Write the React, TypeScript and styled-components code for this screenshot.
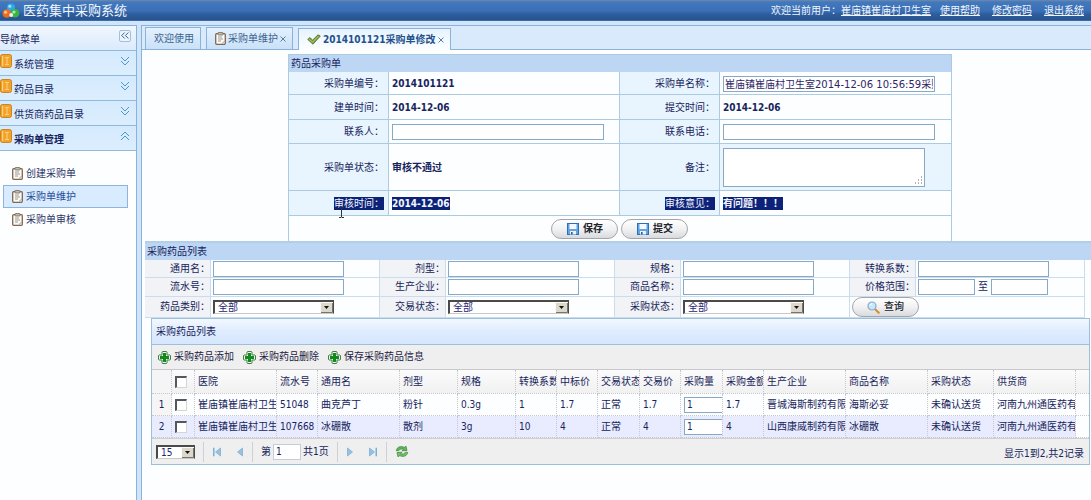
import React from "react";
import styled, { createGlobalStyle, css } from "styled-components";

const GlobalStyle = createGlobalStyle`
  *, *::before, *::after { box-sizing: border-box; }
  body {
    margin: 0;
    background: #fdfeff;
    color: #17245c;
    font: 10px/14px "DejaVu Sans Condensed", "DejaVu Sans", "Noto Sans CJK SC", sans-serif;
  }
  button, input, select, textarea { font: inherit; color: inherit; margin: 0; }
  button { cursor: pointer; }
`;

/* ---------- icons ---------- */

const LogoIcon = () => (
  <svg width="18" height="16" viewBox="0 0 18 16" aria-hidden="true">
    <circle cx="9" cy="4.5" r="4" fill="#2fa8e8" />
    <circle cx="7.8" cy="3.3" r="1.5" fill="#a5e2fb" />
    <circle cx="4.8" cy="10.5" r="4.3" fill="#ee6a1c" />
    <circle cx="3.6" cy="9.2" r="1.6" fill="#ffc07c" />
    <circle cx="13" cy="10.3" r="4.3" fill="#37b53d" />
    <circle cx="12" cy="9" r="1.6" fill="#b0edaa" />
    <circle cx="9.2" cy="12" r="2" fill="#e8f3ee" />
  </svg>
);

const BookIcon = () => (
  <svg width="12" height="14" viewBox="0 0 12 14" aria-hidden="true">
    <rect x="0.5" y="0.5" width="11" height="13" rx="2" fill="#f2a32a" stroke="#cf8420" />
    <path d="M2 2h1.2v10H2z" fill="#ffd07a" />
    <path d="M5 3.5h4M5 10.5h4M7 4v6" stroke="#ffcf7e" fill="none" />
  </svg>
);

const ClipboardIcon = () => (
  <svg width="11" height="13" viewBox="0 0 11 13" aria-hidden="true">
    <rect x="0.7" y="1.7" width="9.6" height="10.6" rx="1" fill="#fbfaf4" stroke="#806653" strokeWidth="1.3" />
    <rect x="3" y="0.5" width="5" height="2.5" rx="0.5" fill="#c5bca8" stroke="#74695c" strokeWidth="0.8" />
    <path d="M3 5h4M3 7h5M3 9h3" stroke="#8a9188" strokeWidth="0.9" />
    <path d="M7 11.5L9.8 9" stroke="#b0a28e" />
  </svg>
);

const CheckIcon = () => (
  <svg width="14" height="11" viewBox="0 0 14 11" aria-hidden="true">
    <path d="M0.7 5.4L3 3.5l2.5 2.7L11 0.8l2.3 1.3L6 10.2z" fill="#7da343" stroke="#49691f" strokeWidth="0.8" />
    <path d="M2 5.2l3.5 3L11.6 2" stroke="#b4d077" fill="none" strokeWidth="0.8" />
  </svg>
);

const CloseIcon = () => (
  <svg width="6" height="6" viewBox="0 0 6 6" aria-hidden="true">
    <path d="M0.5 0.5l5 5M5.5 0.5l-5 5" stroke="#5c7d9d" fill="none" />
  </svg>
);

const Chevrons = ({ up }: { up?: boolean }) => (
  <svg width="10" height="10" viewBox="0 0 10 10" aria-hidden="true">
    <path
      d={up ? "M1 5l4-4 4 4M1 9l4-4 4 4" : "M1 1l4 4 4-4M1 5l4 4 4-4"}
      fill="none"
      stroke="#4b98d0"
    />
  </svg>
);

const CollapseIcon = () => (
  <svg width="8" height="7" viewBox="0 0 8 7" aria-hidden="true">
    <path d="M3.7 0.5l-3 3 3 3M7.4 0.5l-3 3 3 3" fill="none" stroke="#3c6386" />
  </svg>
);

const SaveIcon = () => (
  <svg width="12" height="12" viewBox="0 0 12 12" aria-hidden="true">
    <rect x="0.5" y="0.5" width="11" height="11" fill="#62a3e4" stroke="#2f6fba" />
    <rect x="2.5" y="1" width="7" height="5" fill="#f3f9ff" />
    <rect x="3" y="8" width="6" height="3.5" fill="#eaf3fb" />
    <rect x="4" y="9" width="1.6" height="2.5" fill="#2c5d9c" />
  </svg>
);

const SearchIcon = () => (
  <svg width="13" height="13" viewBox="0 0 13 13" aria-hidden="true">
    <path d="M7.7 7.7l4 4" stroke="#dc8c35" strokeWidth="2.2" strokeLinecap="round" />
    <circle cx="5" cy="5" r="4" fill="#c7e7fa" stroke="#88a9c8" strokeWidth="1.2" />
    <path d="M2.8 4.6q.6-1.8 2.4-1.9" stroke="#fff" fill="none" />
  </svg>
);

const PlusIcon = () => (
  <svg width="13" height="13" viewBox="0 0 13 13" aria-hidden="true">
    <path
      d="M4.5 0.5h4l.5.5v3h3l.5.5v4l-.5.5H9v3l-.5.5h-4L4 12V9H1l-.5-.5v-4L1 4h3V1z"
      fill="#eefaec"
      stroke="#3f7f45"
      strokeLinejoin="round"
    />
    <path d="M5 2h3v3h3v3H8v3H5V8H2V5h3z" fill="#128a1e" />
  </svg>
);

const PagerIcon = ({ kind }: { kind: "first" | "prev" | "next" | "last" }) => {
  const back = kind === "first" || kind === "prev";
  const bar = kind === "first" || kind === "last";
  return (
    <svg width="10" height="10" viewBox="0 0 10 10" aria-hidden="true">
      <path d={back ? "M8.5 1v8L3.5 5z" : "M1.5 1v8L6.5 5z"} fill="#94c2e4" stroke="#7ba9d0" strokeWidth="0.7" />
      {bar && <rect x={back ? 1 : 7.5} y="0.7" width="1.5" height="8.6" fill="#7faed4" />}
    </svg>
  );
};

const RefreshIcon = () => (
  <svg width="14" height="13" viewBox="0 0 14 13" aria-hidden="true">
    <path d="M1.2 5.6C2 2 6 .6 9.2 2.4L11 1.2l1 4.3-5 .3 1.4-1.6C6.6 3.5 4.8 4 3.6 5.8z" fill="#62b557" stroke="#35813a" strokeWidth="0.7" />
    <path d="M12.8 7.4C12 11 8 12.4 4.8 10.6L3 11.8 2 7.5l5-.3-1.4 1.6c1.8.7 3.6.2 4.8-1.6z" fill="#74c164" stroke="#35813a" strokeWidth="0.7" />
  </svg>
);

/* ---------- page frame ---------- */

const Page = styled.div`
  display: flex;
  flex-direction: column;
  min-height: 100vh;
  background: #cfe5fb;
`;

const TopBar = styled.header`
  display: flex;
  align-items: center;
  justify-content: space-between;
  height: 21px;
  padding: 0 7px 0 2px;
  color: #f1f6fd;
  background: linear-gradient(#7089ab 0, #4279bd 2px, #3a6fb6 11px, #2d5d9e 14px, #28548f 20px, #5781b4 21px);
`;

const Brand = styled.h1`
  display: flex;
  align-items: center;
  gap: 3px;
  margin: 0;
  font-size: 13px;
  line-height: 20px;
  font-weight: 400;
`;

const UserLinks = styled.nav`
  display: flex;
  gap: 12px;
  white-space: nowrap;
  a { color: inherit; text-decoration: underline; }
  span { margin-right: -3px; }
`;

const Body = styled.div`
  display: flex;
  flex: 1;
  gap: 4px;
  padding-top: 4px;
`;

const Sidebar = styled.aside`
  flex: none;
  width: 137px;
  background: #fdfeff;
  border: solid #8db2d8;
  border-width: 1px 1px 0 0;
`;

const barBottom = css`
  border-bottom: 1px solid #8fb9dd;
`;

const SideTitle = styled.div`
  display: flex;
  align-items: center;
  justify-content: space-between;
  height: 25px;
  padding: 3px 5px 0 0;
  background: linear-gradient(#f1f7fe, #dbeafc);
  ${barBottom}
`;

const CollapseButton = styled.button`
  display: grid;
  place-items: center;
  width: 12px;
  height: 12px;
  padding: 0;
  margin-bottom: 8px;
  border: 1px solid #9fbfdb;
  border-radius: 2px;
  background: #eaf4fe;
`;

const AccordionHead = styled.button<{ $open?: boolean }>`
  display: flex;
  align-items: center;
  gap: 2px;
  width: 100%;
  height: 25px;
  padding: 0 6px 0 0;
  border: 0;
  ${barBottom}
  background: linear-gradient(#d4eafd, #dceefe);
  font-weight: ${(p) => (p.$open ? 700 : 400)};
  text-align: left;
  > span { flex: 1; padding-top: 4px; }
  > svg { margin-bottom: 4px; }
`;

const SubMenu = styled.ul`
  list-style: none;
  margin: 0;
  padding: 11px 8px 0 3px;
`;

const SubItem = styled.a<{ $active?: boolean }>`
  display: flex;
  align-items: center;
  gap: 3px;
  height: 23px;
  padding-left: 8px;
  color: ${(p) => (p.$active ? "#264d94" : "#2b3567")};
  text-decoration: none;
  border: 1px solid ${(p) => (p.$active ? "#8eb4dc" : "transparent")};
  background: ${(p) => (p.$active ? "#d9ebff" : "transparent")};
`;

const Main = styled.main`
  flex: 1;
  min-width: 0;
  background: #fdfeff;
  border: solid #8db2d8;
  border-width: 1px 0 0 1px;
`;

const TabStrip = styled.div`
  display: flex;
  align-items: flex-end;
  gap: 5px;
  height: 24px;
  padding-left: 3px;
  background: #d8eafc;
  border-bottom: 1px solid #8db2d8;
`;

const Tab = styled.div<{ $active?: boolean }>`
  display: flex;
  align-items: center;
  gap: 2px;
  height: 22px;
  padding: 0 6px 0 8px;
  border: 1px solid #8db2d8;
  border-bottom-width: 0;
  background: ${(p) => (p.$active ? "linear-gradient(#e6f3ff, #fdfeff)" : "linear-gradient(#e4f1fe, #c9e1f8)")};
  margin-bottom: ${(p) => (p.$active ? "-1px" : "0")};
  white-space: nowrap;
`;

const TabLabel = styled.button<{ $active?: boolean }>`
  display: flex;
  align-items: center;
  gap: 2px;
  padding: 0;
  border: 0;
  background: none;
  color: ${(p) => (p.$active ? "#22518d" : "#3d638f")};
  font-weight: ${(p) => (p.$active ? 700 : 400)};
`;

const PlainButton = styled.button`
  display: grid;
  place-items: center;
  padding: 0;
  border: 0;
  background: none;
`;

const Content = styled.div`
  padding: 4px 0 0 3px;
`;

/* ---------- controls ---------- */

const TextBox = styled.input<{ $w: number }>`
  width: ${(p) => p.$w}px;
  height: 16px;
  padding: 0 2px;
  border: 1px solid #86a9c8;
  background: #fff;
`;

const NameBox = styled(TextBox)`
  padding: 0 1px;
  font-family: "DejaVu Sans", "Noto Sans CJK SC", sans-serif;
  text-overflow: clip;
  color: #302567;
`;

const NoteWrap = styled.div`
  position: relative;
  width: 202px;
  height: 39px;
  svg { position: absolute; right: 2px; bottom: 2px; pointer-events: none; }
`;

const Note = styled.textarea`
  display: block;
  width: 100%;
  height: 100%;
  border: 1px solid #86a9c8;
  background: #fff;
  resize: none;
`;

const PillButton = styled.button`
  display: inline-flex;
  align-items: center;
  justify-content: center;
  gap: 4px;
  width: 67px;
  height: 20px;
  padding: 0;
  border: 1px solid #a2a5aa;
  border-radius: 10px;
  background: linear-gradient(#ffffff, #f2f2f3 50%, #d9dadd);
  color: #20242c;
  font-weight: 500;
`;

const SelectBox = styled.span<{ $w: number }>`
  position: relative;
  display: inline-block;
  width: ${(p) => p.$w}px;
  height: 14px;
  border: solid #4a4a4a;
  border-width: 2px 1px 1px 2px;
  border-bottom-color: #c9c9c4;
  background: #fff;
  select {
    appearance: none;
    display: block;
    width: 100%;
    height: 11px;
    padding: 0 14px 0 3px;
    border: 0;
    background: none;
    line-height: 11px;
    color: #2a2375;
  }
  svg { position: absolute; right: 0; top: 0; pointer-events: none; }
`;

const Select = ({ id, w, value, label }: { id: string; w: number; value: string; label?: string }) => (
  <SelectBox $w={w}>
    <select id={id} defaultValue={value} aria-label={label}>
      <option>{value}</option>
    </select>
    <svg width="13" height="11" viewBox="0 0 13 11" aria-hidden="true">
      <rect width="13" height="11" fill="#dcd8cc" />
      <path d="M0.5 11V0.5H13" stroke="#fbfaf5" fill="none" />
      <path d="M12.5 1v9.5H1" stroke="#77746b" fill="none" />
      <path d="M4 4h5L6.5 7z" fill="#111" />
    </svg>
  </SelectBox>
);

/* ---------- order form ---------- */

const FormArea = styled.div`
  padding-left: 4px;
`;

const OrderForm = styled.form`
  position: relative;
  width: 70.5%;
  margin: 0 auto;
  border: 1px solid #adcbe0;
  border-bottom: 0;
`;

const Caption = styled.h2`
  margin: 0;
  height: 17px;
  padding: 0 2px;
  font-size: 10px;
  line-height: 17px;
  font-weight: 400;
  background: #bcd6f4;
`;

const FormRow = styled.div<{ $h: number }>`
  display: grid;
  grid-template-columns: 100px 1fr 100px 1fr;
  height: ${(p) => p.$h}px;
  border-bottom: 1px solid #adcbe0;
`;

const FormLabel = styled.label`
  display: flex;
  align-items: center;
  justify-content: flex-end;
  padding: 1px 4px 0 0;
  background: #e8f5ff;
  border-right: 1px solid #adcbe0;
`;

const FormValue = styled.div<{ $tint?: boolean }>`
  display: flex;
  align-items: center;
  padding: 1px 0 0 3px;
  font-weight: 700;
  border-right: 1px solid #adcbe0;
  background: ${(p) => (p.$tint ? "#e8f5ff" : "transparent")};
  &:last-child { border-right: 0; }
  input, textarea { font-weight: 400; }
`;

const Marked = styled.span`
  background: #0c2278;
  color: #f4f6ff;
  line-height: 13px;
`;

const FormActions = styled.div`
  display: flex;
  align-items: center;
  justify-content: center;
  gap: 3px;
  height: 25px;
  button { font-weight: 700; }
`;

const Caret = styled.svg`
  position: absolute;
  left: 49px;
  top: 152px;
`;

/* ---------- search ---------- */

const SearchForm = styled.form`
  border-top: 2px solid #b3cfe8;
`;

const SearchGrid = styled.div`
  display: grid;
  grid-template-columns: repeat(4, 66px 1fr);
  grid-template-rows: 18px 19px 21px;
  margin-right: 6px;
`;

const SearchLabel = styled.label`
  display: flex;
  align-items: center;
  justify-content: flex-end;
  background: #f1f3f6;
  border: solid #cbdcec;
  border-width: 0 1px 1px 0;
`;

const SearchField = styled.div<{ $wide?: boolean }>`
  display: flex;
  align-items: center;
  gap: 3px;
  padding-left: 2px;
  border: solid #cbdcec;
  border-width: 0 1px 1px 0;
  grid-column: ${(p) => (p.$wide ? "span 2" : "auto")};
`;

/* ---------- grid panel ---------- */

const Panel = styled.section`
  margin: 0 1px 0 6px;
  border: 1px solid #9dbfda;
`;

const PanelTitle = styled.h2`
  margin: 0;
  height: 26px;
  padding: 0 4px;
  font-size: 10px;
  line-height: 26px;
  font-weight: 400;
  background: linear-gradient(#f2f8ff, #dfecfe 50%, #d5e6fd);
  border-bottom: 1px solid #9dbfda;
`;

const Toolbar = styled.div`
  display: flex;
  align-items: center;
  gap: 9px;
  height: 25px;
  padding: 0 6px;
  background: #efefef;
  border-bottom: 1px solid #c9c9cb;
`;

const ToolButton = styled.button`
  display: flex;
  align-items: center;
  gap: 3px;
  padding: 0;
  border: 0;
  background: none;
  color: #1d2244;
  white-space: nowrap;
`;

const DataTable = styled.table`
  width: 100%;
  table-layout: fixed;
  border-collapse: separate;
  border-spacing: 0;
  th, td {
    height: 22px;
    padding: 0 0 0 3px;
    overflow: hidden;
    white-space: nowrap;
    text-align: left;
    font-weight: 400;
    border: dotted #c5c8d0;
    border-width: 0 1px 1px 0;
  }
  th {
    height: 24px;
    background: linear-gradient(#fbfbfb, #f1f1f1);
  }
  th:last-child, td:last-child { border-right: 0; }
  tbody tr:nth-child(2) td:not(:last-child) { background: #e9ecff; }
  tbody td:first-child, thead th:first-child {
    padding: 0;
    text-align: center;
    background: #f5f5f6;
  }
  input { display: block; }
`;

const Tick = styled.input`
  appearance: none;
  width: 12px;
  height: 12px;
  border: solid #55575c;
  border-width: 2px 1px 1px 2px;
  border-right-color: #d5d5d2;
  border-bottom-color: #d5d5d2;
  background: #fff;
`;

const Pager = styled.div`
  display: flex;
  align-items: center;
  height: 26px;
  padding: 0 5px 0 4px;
  gap: 8px;
  background: #efefef;
  border-top: 1px solid #d0d0d2;
  white-space: nowrap;
`;

const Divider = styled.span`
  width: 1px;
  height: 20px;
  background: #cdd0d4;
`;

const IconPair = styled.span`
  display: flex;
  gap: 12px;
`;

const PageNo = styled.label`
  display: flex;
  align-items: center;
  gap: 2px;
  input {
    width: 28px;
    height: 16px;
    padding: 0 2px;
    border: 1px solid #c5cdd8;
    background: #fff;
  }
`;

const Summary = styled.span`
  margin-left: auto;
  padding-top: 5px;
`;

const columns: [string, number][] = [
  ["医院", 82], ["流水号", 41], ["通用名", 82], ["剂型", 58], ["规格", 58], ["转换系数", 41],
  ["中标价", 41], ["交易状态", 42], ["交易价", 41], ["采购量", 42], ["采购金额", 41],
  ["生产企业", 82], ["商品名称", 82], ["采购状态", 66], ["供货商", 82],
];

const rows = [
  ["崔庙镇崔庙村卫生室", "51048", "曲克芦丁", "粉针", "0.3g", "1", "1.7", "正常", "1.7", "1", "1.7", "晋城海斯制药有限公司", "海斯必妥", "未确认送货", "河南九州通医药有限公司"],
  ["崔庙镇崔庙村卫生室", "107668", "冰硼散", "散剂", "3g", "10", "4", "正常", "4", "1", "4", "山西康威制药有限公司", "冰硼散", "未确认送货", "河南九州通医药有限公司"],
];

const QTY = 9;

const searchFields = [
  { label: "通用名", id: "generic" },
  { label: "剂型", id: "form" },
  { label: "规格", id: "spec" },
  { label: "转换系数", id: "ratio" },
  { label: "流水号", id: "serial" },
  { label: "生产企业", id: "maker" },
  { label: "商品名称", id: "brand" },
];

const TextField = ({ label, id }: { label: string; id: string }) => (
  <>
    <SearchLabel htmlFor={id}>{label}：</SearchLabel>
    <SearchField><TextBox $w={131} id={id} /></SearchField>
  </>
);

export default function App() {
  return (
    <Page>
      <GlobalStyle />
      <TopBar>
        <Brand><LogoIcon />医药集中采购系统</Brand>
        <UserLinks>
          <span>欢迎当前用户：<a href="#user">崔庙镇崔庙村卫生室</a></span>
          <a href="#help">使用帮助</a>
          <a href="#password">修改密码</a>
          <a href="#logout">退出系统</a>
        </UserLinks>
      </TopBar>
      <Body>
        <Sidebar>
          <SideTitle>
            导航菜单
            <CollapseButton aria-label="折叠"><CollapseIcon /></CollapseButton>
          </SideTitle>
          {["系统管理", "药品目录", "供货商药品目录"].map((t) => (
            <AccordionHead key={t}><BookIcon /><span>{t}</span><Chevrons /></AccordionHead>
          ))}
          <AccordionHead $open><BookIcon /><span>采购单管理</span><Chevrons up /></AccordionHead>
          <SubMenu>
            {["创建采购单", "采购单维护", "采购单审核"].map((t, i) => (
              <li key={t}><SubItem href="#menu" $active={i === 1}><ClipboardIcon />{t}</SubItem></li>
            ))}
          </SubMenu>
        </Sidebar>
        <Main>
          <TabStrip>
            <Tab><TabLabel>欢迎使用</TabLabel></Tab>
            <Tab>
              <TabLabel><ClipboardIcon />采购单维护</TabLabel>
              <PlainButton aria-label="关闭"><CloseIcon /></PlainButton>
            </Tab>
            <Tab $active>
              <TabLabel $active><CheckIcon />2014101121采购单修改</TabLabel>
              <PlainButton aria-label="关闭"><CloseIcon /></PlainButton>
            </Tab>
          </TabStrip>
          <Content>
            <FormArea>
              <OrderForm onSubmit={(e) => e.preventDefault()}>
                <Caption>药品采购单</Caption>
                <FormRow $h={23}>
                  <FormLabel as="span">采购单编号：</FormLabel>
                  <FormValue>2014101121</FormValue>
                  <FormLabel htmlFor="order-name">采购单名称：</FormLabel>
                  <FormValue><NameBox $w={212} id="order-name" defaultValue="崔庙镇崔庙村卫生室2014-12-06 10:56:59采购单" /></FormValue>
                </FormRow>
                <FormRow $h={25}>
                  <FormLabel as="span">建单时间：</FormLabel>
                  <FormValue>2014-12-06</FormValue>
                  <FormLabel as="span">提交时间：</FormLabel>
                  <FormValue>2014-12-06</FormValue>
                </FormRow>
                <FormRow $h={24}>
                  <FormLabel htmlFor="contact">联系人：</FormLabel>
                  <FormValue><TextBox $w={212} id="contact" /></FormValue>
                  <FormLabel htmlFor="phone">联系电话：</FormLabel>
                  <FormValue><TextBox $w={212} id="phone" /></FormValue>
                </FormRow>
                <FormRow $h={47}>
                  <FormLabel as="span">采购单状态：</FormLabel>
                  <FormValue>审核不通过</FormValue>
                  <FormLabel htmlFor="note">备注：</FormLabel>
                  <FormValue $tint>
                    <NoteWrap>
                      <Note id="note" />
                      <svg width="9" height="9" viewBox="0 0 9 9" aria-hidden="true">
                        <path d="M7 1h1M4 4h1M7 4h1M1 7h1M4 7h1M7 7h1" stroke="#9a9aa8" strokeWidth="1.4" />
                      </svg>
                    </NoteWrap>
                  </FormValue>
                </FormRow>
                <FormRow $h={25}>
                  <FormLabel as="span"><Marked>审核时间：</Marked></FormLabel>
                  <FormValue><Marked>2014-12-06</Marked></FormValue>
                  <FormLabel as="span"><Marked>审核意见：</Marked></FormLabel>
                  <FormValue><Marked>有问题！！！</Marked></FormValue>
                </FormRow>
                <FormActions>
                  <PillButton type="submit"><SaveIcon />保存</PillButton>
                  <PillButton type="button"><SaveIcon />提交</PillButton>
                </FormActions>
                <Caret width="7" height="11" viewBox="0 0 7 11" aria-hidden="true">
                  <path d="M1 .5h2l.5.5.5-.5h2M3.5 1v9M1 10.5h2l.5-.5.5.5h2" stroke="#333" fill="none" />
                </Caret>
              </OrderForm>
            </FormArea>
            <SearchForm onSubmit={(e) => e.preventDefault()}>
              <Caption>采购药品列表</Caption>
              <SearchGrid>
                {searchFields.map((f) => <TextField key={f.id} {...f} />)}
                <SearchLabel htmlFor="price-from">价格范围：</SearchLabel>
                <SearchField>
                  <TextBox $w={57} id="price-from" />
                  <label htmlFor="price-to">至</label>
                  <TextBox $w={57} id="price-to" />
                </SearchField>
                {["药品类别", "交易状态", "采购状态"].map((t, i) => (
                  <React.Fragment key={t}>
                    <SearchLabel htmlFor={`pick-${i}`}>{t}：</SearchLabel>
                    <SearchField><Select id={`pick-${i}`} w={121} value="全部" /></SearchField>
                  </React.Fragment>
                ))}
                <SearchField $wide><PillButton><SearchIcon />查询</PillButton></SearchField>
              </SearchGrid>
            </SearchForm>
            <Panel>
              <PanelTitle>采购药品列表</PanelTitle>
              <Toolbar>
                {["采购药品添加", "采购药品删除", "保存采购药品信息"].map((t) => (
                  <ToolButton key={t}><PlusIcon />{t}</ToolButton>
                ))}
              </Toolbar>
              <DataTable>
                <colgroup>
                  <col style={{ width: 20 }} />
                  <col style={{ width: 23 }} />
                  {columns.map(([name, w]) => <col key={name} style={{ width: w }} />)}
                  <col />
                </colgroup>
                <thead>
                  <tr>
                    <th />
                    <th><Tick type="checkbox" aria-label="全选" /></th>
                    {columns.map(([name]) => <th key={name}>{name}</th>)}
                    <th />
                  </tr>
                </thead>
                <tbody>
                  {rows.map((row, r) => (
                    <tr key={r}>
                      <td>{r + 1}</td>
                      <td><Tick type="checkbox" aria-label={`选择第${r + 1}行`} /></td>
                      {row.map((v, c) => (
                        <td key={c}>
                          {c === QTY ? <TextBox $w={60} defaultValue={v} aria-label="采购量" /> : v}
                        </td>
                      ))}
                      <td />
                    </tr>
                  ))}
                </tbody>
              </DataTable>
              <Pager>
                <Select id="page-size" w={39} value="15" label="每页条数" />
                <Divider />
                <IconPair>
                  <PlainButton aria-label="首页"><PagerIcon kind="first" /></PlainButton>
                  <PlainButton aria-label="上一页"><PagerIcon kind="prev" /></PlainButton>
                </IconPair>
                <Divider />
                <PageNo>第<input defaultValue="1" />共1页</PageNo>
                <Divider />
                <IconPair>
                  <PlainButton aria-label="下一页"><PagerIcon kind="next" /></PlainButton>
                  <PlainButton aria-label="末页"><PagerIcon kind="last" /></PlainButton>
                </IconPair>
                <Divider />
                <PlainButton aria-label="刷新"><RefreshIcon /></PlainButton>
                <Summary>显示1到2,共2记录</Summary>
              </Pager>
            </Panel>
          </Content>
        </Main>
      </Body>
    </Page>
  );
}
